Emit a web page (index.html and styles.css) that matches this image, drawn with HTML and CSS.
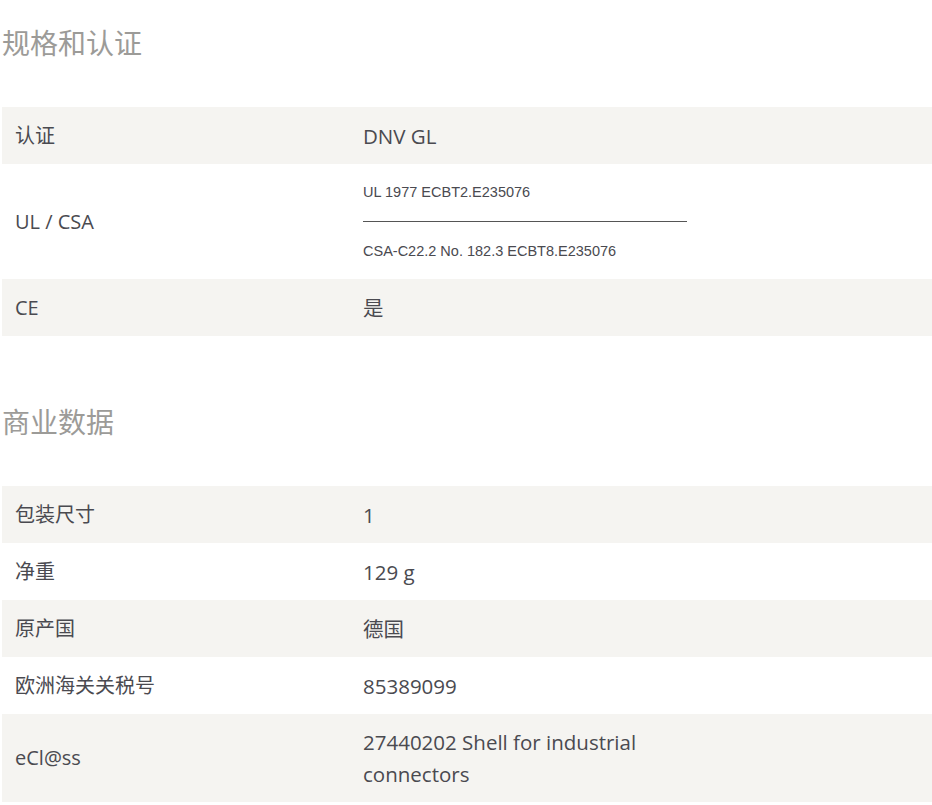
FILE: index.html
```html
<!DOCTYPE html>
<html lang="zh-CN">
<head>
<meta charset="utf-8">
<title>规格和认证</title>
<link rel="stylesheet" href="styles.css">
</head>
<body>
<div class="page">
  <section class="section">
    <h2 class="section-title">规格和认证</h2>
    <div class="spec-table">
      <div class="row shaded">
        <div class="label">认证</div>
        <div class="value">DNV GL</div>
      </div>
      <div class="row tall">
        <div class="label">UL / CSA</div>
        <div class="value small">
          <div class="small-line">UL 1977 ECBT2.E235076</div>
          <div class="divider"></div>
          <div class="small-line">CSA-C22.2 No. 182.3 ECBT8.E235076</div>
        </div>
      </div>
      <div class="row shaded">
        <div class="label">CE</div>
        <div class="value">是</div>
      </div>
    </div>
  </section>
  <section class="section second">
    <h2 class="section-title">商业数据</h2>
    <div class="spec-table">
      <div class="row shaded">
        <div class="label">包装尺寸</div>
        <div class="value">1</div>
      </div>
      <div class="row">
        <div class="label">净重</div>
        <div class="value">129 g</div>
      </div>
      <div class="row shaded">
        <div class="label">原产国</div>
        <div class="value">德国</div>
      </div>
      <div class="row">
        <div class="label">欧洲海关关税号</div>
        <div class="value">85389099</div>
      </div>
      <div class="row shaded multi">
        <div class="label">eCl@ss</div>
        <div class="value">27440202 Shell for industrial connectors</div>
      </div>
    </div>
  </section>
</div>
</body>
</html>
```
FILE: styles.css
```css
html, body {
  margin: 0;
  padding: 0;
  background: #ffffff;
}

body {
  font-family: "Open Sans", "Noto Sans CJK SC", sans-serif;
  color: #4a4a50;
}

.page {
  margin-left: 2px;
  padding-top: 22px;
}

.section-title {
  margin: 0 0 45px 0;
  font-size: 28px;
  line-height: 40px;
  font-weight: 400;
  color: #9c9b98;
  font-family: "Noto Sans CJK SC", sans-serif;
}

.section.second {
  margin-top: 65px;
}

.spec-table {
  display: flex;
  flex-direction: column;
}

.row {
  display: grid;
  grid-template-columns: 348px 350px 1fr;
  min-height: 57px;
  align-items: center;
  font-size: 20px;
  line-height: 32px;
}

.row.shaded {
  background: #f5f4f1;
}

.row.multi {
  padding: 12px 0;
}

.label {
  padding-left: 13px;
}

.value {
  padding: 0 13px;
  font-size: 20.5px;
}

.value.small {
  padding-top: 18px;
  padding-bottom: 18px;
  font-family: "Liberation Sans", Arial, sans-serif;
  font-size: 14.5px;
  line-height: 20px;
}

.divider {
  height: 1px;
  background: #555;
  margin: 19px 0;
}
```
